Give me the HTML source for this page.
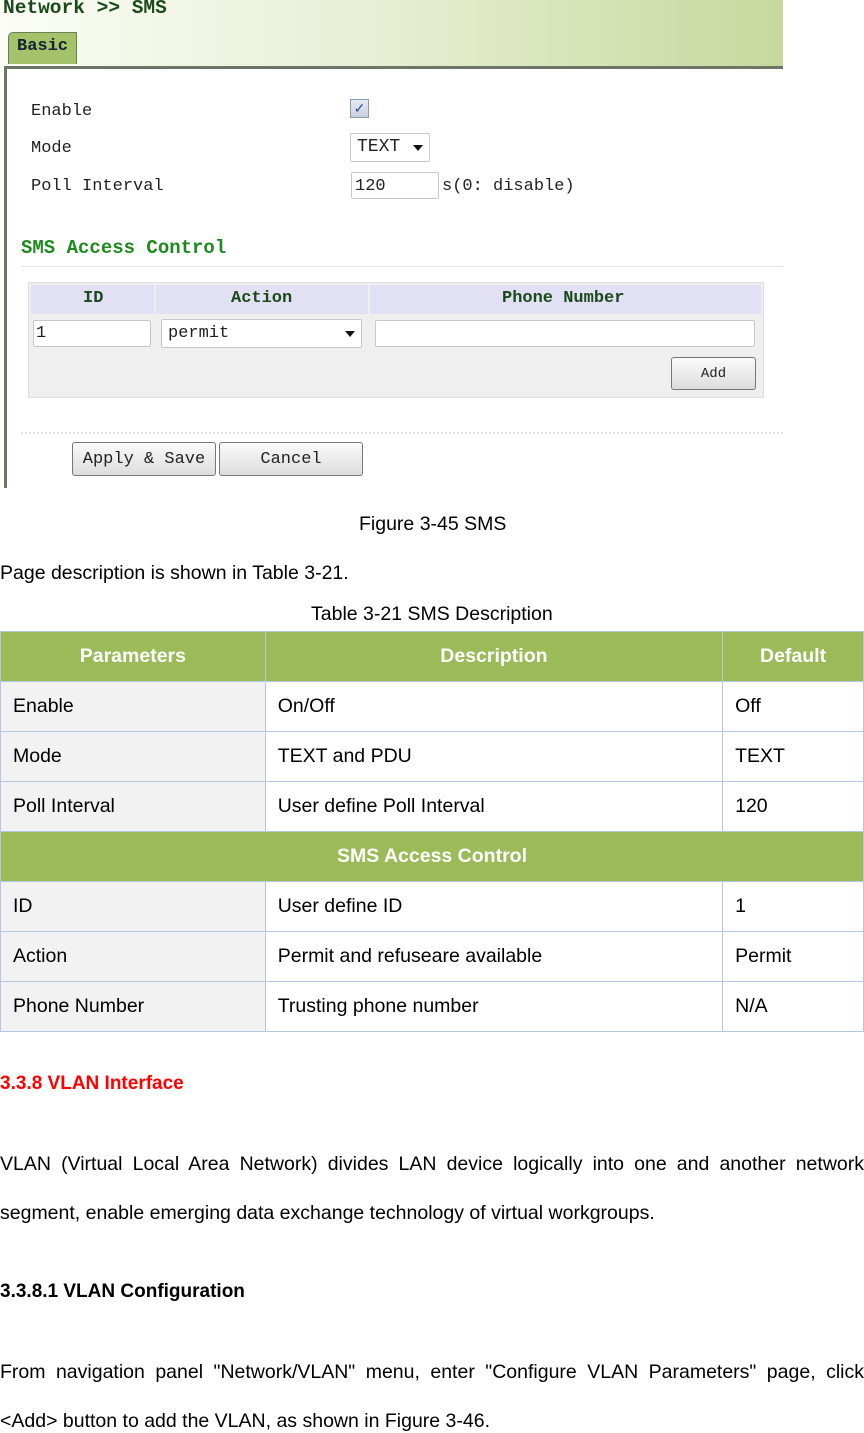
<!DOCTYPE html>
<html><head><meta charset="utf-8"><style>
*{margin:0;padding:0;box-sizing:border-box}
body{width:864px;height:1433px;background:#fff;position:relative;overflow:hidden;font-family:"Liberation Sans",sans-serif;color:#000}
.a{position:absolute;white-space:nowrap}
.m{font-family:"Liberation Mono",monospace;font-size:17px;color:#222}
.mb{font-family:"Liberation Mono",monospace;font-weight:bold;color:#1a4a1a}
.inp{position:absolute;background:#fff;border:1px solid #c8c8c8;border-radius:2px}
.btn{position:absolute;border:1px solid #777;border-radius:3px;background:linear-gradient(#fafafa,#ddd);font-family:"Liberation Mono",monospace;font-size:17px;color:#222;text-align:center}
.d{font-size:19.5px}
table{position:absolute;left:0;top:631px;width:864px;border-collapse:collapse;font-size:19.5px}
td{border:1px solid #b4c8e4;height:50px;padding-left:12px}
td.f{background:#f2f2f2}
tr.h td{background:#9bbb59;color:#fff;font-weight:bold;text-align:center;padding:0;border-color:#b4c8e4}
</style></head><body>
<div class="a" style="left:0;top:0;width:783px;height:68px;background:linear-gradient(90deg,#fbfdf6 0%,#e6eed2 50%,#c6d99c 100%)"></div>
<div class="a mb" style="left:3px;top:-3px;font-size:19.5px">Network &gt;&gt; SMS</div>
<div class="a" style="left:8px;top:32px;width:69px;height:32px;background:#a4c26a;border:1px solid #6e7f55;border-bottom:none;border-radius:5px 0 0 0"></div>
<div class="a mb" style="left:17px;top:37px;font-size:17px;color:#123">Basic</div>
<div class="a" style="left:4px;top:66px;width:779px;height:3px;background:#6c7668"></div>
<div class="a" style="left:4px;top:66px;width:3px;height:422px;background:#6c7668"></div>
<div class="a m" style="left:31px;top:102px">Enable</div>
<div class="a m" style="left:31px;top:139px">Mode</div>
<div class="a m" style="left:31px;top:177px">Poll Interval</div>
<div class="a" style="left:350px;top:99px;width:19px;height:19px;border:1px solid #8a9ab0;background:linear-gradient(#e6eaf2,#c8d0de);color:#2a4c9a;font-size:14px;text-align:center;line-height:17px">✓</div>
<div class="inp" style="left:350px;top:133px;width:80px;height:29px"></div>
<div class="a m" style="left:357px;top:137px;font-size:18px">TEXT</div>
<div class="a" style="left:413px;top:145px;border-left:5px solid transparent;border-right:5px solid transparent;border-top:6px solid #111"></div>
<div class="inp" style="left:351px;top:172px;width:88px;height:27px"></div>
<div class="a m" style="left:355px;top:177px">120</div>
<div class="a m" style="left:442px;top:177px">s(0: disable)</div>
<div class="a mb" style="left:21px;top:237px;font-size:19px;color:#1e8a1e">SMS Access Control</div>
<div class="a" style="left:21px;top:266px;width:762px;height:1px;background:#e6e6e6"></div>
<div class="a" style="left:28px;top:282px;width:736px;height:116px;border:1px solid #ddd;background:#efefef"></div>
<div class="a" style="left:31px;top:285px;width:123px;height:29px;background:#e2e0f4"></div>
<div class="a" style="left:156px;top:285px;width:212px;height:29px;background:#e2e0f4"></div>
<div class="a" style="left:370px;top:285px;width:391px;height:29px;background:#e2e0f4"></div>
<div class="a mb" style="left:83px;top:289px;font-size:17px">ID</div>
<div class="a mb" style="left:231px;top:289px;font-size:17px">Action</div>
<div class="a mb" style="left:502px;top:289px;font-size:17px">Phone Number</div>
<div class="inp" style="left:33px;top:320px;width:118px;height:27px"></div>
<div class="a m" style="left:36px;top:324px">1</div>
<div class="inp" style="left:161px;top:319px;width:201px;height:29px"></div>
<div class="a m" style="left:168px;top:324px">permit</div>
<div class="a" style="left:345px;top:331px;border-left:5px solid transparent;border-right:5px solid transparent;border-top:6px solid #111"></div>
<div class="inp" style="left:375px;top:320px;width:380px;height:27px"></div>
<div class="btn" style="left:671px;top:357px;width:85px;height:33px;line-height:33px;font-size:14px">Add</div>
<div class="a" style="left:21px;top:432px;width:762px;border-top:2px dotted #e2e2e2"></div>
<div class="btn" style="left:72px;top:442px;width:144px;height:34px;line-height:34px">Apply &amp; Save</div>
<div class="btn" style="left:219px;top:442px;width:144px;height:34px;line-height:34px">Cancel</div>
<div class="a d" style="left:359px;top:513px">Figure 3-45 SMS</div>
<div class="a d" style="left:0;top:562px">Page description is shown in Table 3-21.</div>
<div class="a d" style="left:311px;top:603px">Table 3-21 SMS Description</div>
<table>
<colgroup><col style="width:265px"><col style="width:458px"><col style="width:141px"></colgroup>
<tr class="h"><td>Parameters</td><td>Description</td><td>Default</td></tr>
<tr><td class="f">Enable</td><td>On/Off</td><td>Off</td></tr>
<tr><td class="f">Mode</td><td>TEXT and PDU</td><td>TEXT</td></tr>
<tr><td class="f">Poll Interval</td><td>User define Poll Interval</td><td>120</td></tr>
<tr class="h"><td colspan="3">SMS Access Control</td></tr>
<tr><td class="f">ID</td><td>User define ID</td><td>1</td></tr>
<tr><td class="f">Action</td><td>Permit and refuseare available</td><td>Permit</td></tr>
<tr><td class="f">Phone Number</td><td>Trusting phone number</td><td>N/A</td></tr>
</table>
<div class="a" style="left:0;top:1073px;font-size:19px;font-weight:bold;color:#f00">3.3.8 VLAN Interface</div>
<div class="a d" style="left:0;top:1153px;width:864px;text-align:justify;text-align-last:justify">VLAN (Virtual Local Area Network) divides LAN device logically into one and another network</div>
<div class="a d" style="left:0;top:1202px">segment, enable emerging data exchange technology of virtual workgroups.</div>
<div class="a" style="left:0;top:1281px;font-size:19px;font-weight:bold">3.3.8.1 VLAN Configuration</div>
<div class="a d" style="left:0;top:1361px;width:864px;text-align:justify;text-align-last:justify">From navigation panel "Network/VLAN" menu, enter "Configure VLAN Parameters" page, click</div>
<div class="a d" style="left:0;top:1410px">&lt;Add&gt; button to add the VLAN, as shown in Figure 3-46.</div>
</body></html>
